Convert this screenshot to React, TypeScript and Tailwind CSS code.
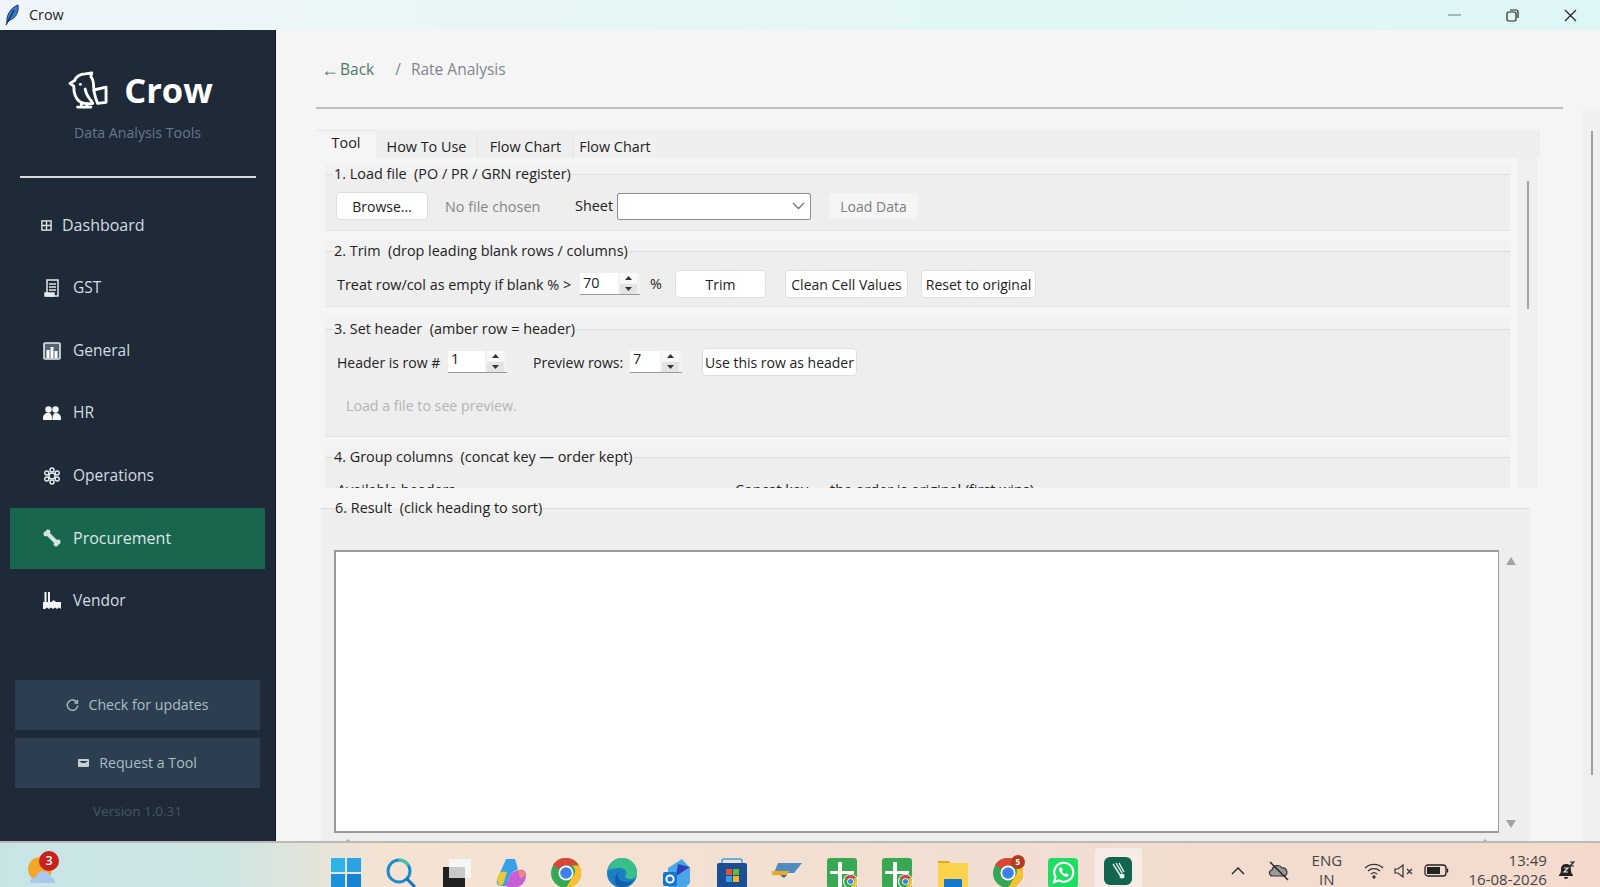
import React from "react";

function Feather() {
  return (
    <svg width="16" height="22" viewBox="0 0 16 22">
      <path d="M3 19C2 12 6 4 14 1c1 7-2 13-8 15z" fill="#3a78c8" stroke="#1c3f78" strokeWidth="1" />
      <path d="M2 21 10 6" stroke="#10284f" strokeWidth="1.2" />
    </svg>
  );
}

function BirdLogo() {
  return (
    <svg width="40" height="38" viewBox="0 0 42 40" fill="none" stroke="#fff" strokeWidth="3" strokeLinejoin="round" strokeLinecap="round">
      <path d="M7 10c1-4 6-7 11-7l7-1-1 4c3 3 3 7 3 12" />
      <path d="M7 10 2 13l4 3c0 7 1 12 6 16 4 2 10 3 14 2" />
      <path d="M27 20 40 17v16l-9 1c-2-5-3-9-4-14z" />
      <path d="M18 19c1 5 3 9 7 13" />
      <path d="M10 38h14M14 34v4M20 35v3" />
      <circle cx="13" cy="14" r="1.500" fill="#fff" stroke="none" />
    </svg>
  );
}

function NavIcon({ name }: { name: string }) {
  if (name === "Dashboard") {
    return (
      <svg width="11" height="11" viewBox="0 0 12 12" fill="none" stroke="#e5e9ee" strokeWidth="1.500">
        <rect x="1" y="1" width="10" height="10" />
        <path d="M1 6h10M6 1v10" />
      </svg>
    );
  }
  if (name === "GST") {
    return (
      <svg width="18" height="18" viewBox="0 0 18 18" fill="none" stroke="#e5e9ee" strokeWidth="1.500">
        <path d="M4 1h11v16H4z" />
        <path d="M6 5h7M6 8h7M6 11h7" />
        <path d="M2 14h9v3H2z" fill="#e5e9ee" />
      </svg>
    );
  }
  if (name === "General") {
    return (
      <svg width="18" height="18" viewBox="0 0 18 18">
        <rect x="1" y="1" width="16" height="16" rx="1" fill="#566275" stroke="#e5e9ee" strokeWidth="1.600" />
        <path d="M3.500 8h3v8h-3zM7.500 5h3v11h-3zM11.500 9h3v7h-3z" fill="#fff" />
      </svg>
    );
  }
  if (name === "HR") {
    return (
      <svg width="18" height="14" viewBox="0 0 18 14" fill="#f6f7f8">
        <circle cx="5.500" cy="3.500" r="3.200" />
        <circle cx="12.500" cy="3.500" r="3.200" />
        <path d="M0 14v-2c0-3 2-5 5-5s4 2 4 5v2zM9.500 14v-2c0-3 1-5 3.500-5s5 2 5 5v2z" />
      </svg>
    );
  }
  if (name === "Operations") {
    return (
      <svg width="18" height="18" viewBox="0 0 18 18" fill="none" stroke="#e5e9ee" strokeWidth="1.500">
        <circle cx="9" cy="9" r="3" />
        <circle cx="9" cy="3" r="2" />
        <circle cx="9" cy="15" r="2" />
        <circle cx="3.800" cy="6" r="2" />
        <circle cx="14.200" cy="6" r="2" />
        <circle cx="3.800" cy="12" r="2" />
        <circle cx="14.200" cy="12" r="2" />
      </svg>
    );
  }
  if (name === "Procurement") {
    return (
      <svg width="18" height="18" viewBox="0 0 18 18" fill="#d5e2dc">
        <path d="M4 4 14 14" stroke="#d5e2dc" strokeWidth="4" />
        <circle cx="2.800" cy="5" r="2.400" />
        <circle cx="5" cy="2.800" r="2.400" />
        <circle cx="13" cy="15.200" r="2.400" />
        <circle cx="15.200" cy="13" r="2.400" />
      </svg>
    );
  }
  return (
    <svg width="18" height="18" viewBox="0 0 18 18" fill="#f2f4f6">
      <path d="M1.500 0h2v10h-2zM5 0h2v10H5z" />
      <path d="M0 17v-7h8.500l2-2 2.500 2h5v7l-2-1.500L14 17l-2-1.500L10 17l-2-1.500L6 17l-2-1.500L2 17z" />
    </svg>
  );
}

function NavItem({ name, active }: { name: string; active?: boolean }) {
  return (
    <div className={active ? "h-[61px] flex items-center bg-[#19664f] text-[#dbe8e2]" : "h-[61px] flex items-center text-[#d5dbe2]"}>
      <div className={name === "Dashboard" ? "w-[47px] flex justify-end pr-[5px]" : "w-[52px] flex justify-end pr-[1px]"}>
        <NavIcon name={name} />
      </div>
      <span className={name === "Dashboard" ? "ml-[5px] pb-[2px] text-[16px]" : active ? "ml-[11px] text-[16px]" : "ml-[11px] text-[15.500px]"}>{name}</span>
    </div>
  );
}

function Sidebar() {
  return (
    <aside className="w-[276px] shrink-0 flex flex-col bg-[#1e2a38] border-r border-[#10161d]">
      <div className="h-[165px] flex flex-col items-center pt-[40px]">
        <div className="flex items-center gap-[16px] h-[40px] pl-[6px]">
          <BirdLogo />
          <span className="text-[34.500px] font-bold text-white leading-none">Crow</span>
        </div>
        <div className="mt-[13px] text-[14.200px] text-[#66788c] leading-[20px]">Data Analysis Tools</div>
        <div className="mt-[33px] w-[236px] h-[2px] bg-[#d8dade]"></div>
      </div>
      <nav className="mx-[10px] flex flex-col gap-[1.500px]">
        <NavItem name="Dashboard" />
        <NavItem name="GST" />
        <NavItem name="General" />
        <NavItem name="HR" />
        <NavItem name="Operations" />
        <NavItem name="Procurement" active />
        <NavItem name="Vendor" />
      </nav>
      <div className="mt-auto px-[15px] pb-[17px] flex flex-col gap-[8px]">
        <div className="h-[50px] bg-[#2c3e50] flex items-center justify-center gap-[9px] text-[14.200px] text-[#a9bfc0]">
          <svg width="13" height="13" viewBox="0 0 13 13" fill="none" stroke="#a9bfc0" strokeWidth="1.400">
            <path d="M11 3.500A5.200 5.200 0 1 0 11.700 6.500" />
            <path d="M11.500 1v3h-3" />
          </svg>
          <span>Check for updates</span>
        </div>
        <div className="h-[50px] bg-[#2c3e50] flex items-center justify-center gap-[10px] text-[14.200px] text-[#a9bfc0]">
          <svg width="11" height="8" viewBox="0 0 11 8">
            <rect width="11" height="8" rx="1" fill="#c5d2d2" />
            <path d="M1 2h9L7 4H4z" fill="#2c3e50" />
          </svg>
          <span>Request a Tool</span>
        </div>
        <div className="mt-[2px] h-[26px] flex items-center justify-center text-[13.500px] text-[#465564]">Version 1.0.31</div>
      </div>
    </aside>
  );
}

function Frame({ title, height, head, children }: { title: string; height: string; head: string; children?: React.ReactNode }) {
  return (
    <section className={height + " shrink-0 bg-[#eeeeee] border-b border-[#e2e2e2] overflow-hidden"}>
      <div className={head + " flex items-center bg-[linear-gradient(#f2f2f2_50%,#eeeeee_50%)]"}>
        <span className="w-[8px] h-px bg-[#dcdcdc]"></span>
        <span className="px-[1px] text-[14.400px] text-[#222]">{title}</span>
        <span className="flex-1 h-px bg-[#dcdcdc]"></span>
      </div>
      {children}
    </section>
  );
}

function Btn({ label, cls }: { label: string; cls: string }) {
  return (
    <div className={cls + " h-[28px] shrink-0 flex items-center justify-center rounded-[4px] bg-white border border-[#dedede] text-[14px] text-[#222]"}>
      {label}
    </div>
  );
}

function Spin({ value, cls, lead }: { value: string; cls: string; lead: string }) {
  return (
    <div className={cls + " h-[22px] shrink-0 flex border-b border-[#9a9a9a]"}>
      <div className={lead + " flex-1 bg-white pl-[3px] text-[14.400px] text-[#222]"}>{value}</div>
      <div className="w-[22px] pl-[2px] pr-[3px] flex flex-col justify-center gap-[1px] bg-[#f2f2f2]">
        <div className="h-[10px] flex items-center justify-center bg-[#f9f9f9]">
          <svg width="7" height="4" viewBox="0 0 7 4"><path d="M3.500 0 7 4H0z" fill="#333" /></svg>
        </div>
        <div className="h-[10px] flex items-center justify-center bg-[#e4e4e4]">
          <svg width="7" height="4" viewBox="0 0 7 4"><path d="M0 0h7L3.500 4z" fill="#333" /></svg>
        </div>
      </div>
    </div>
  );
}

function ToolPane() {
  return (
    <div className="h-[330px] shrink-0 flex overflow-hidden">
      <div className="w-[1185px] ml-[9px] flex flex-col gap-[10px] pt-[6px]">
        <Frame title="1. Load file  (PO / PR / GRN register)" height="h-[67px]" head="h-[20px]">
          <div className="h-[28px] mt-[8px] pl-[11px] flex items-center">
            <Btn label="Browse..." cls="w-[92px]" />
            <span className="ml-[17px] w-[130px] pt-[1px] text-[14.400px] text-[#858585]">No file chosen</span>
            <span className="text-[14.400px] text-[#222]">Sheet</span>
            <div className="ml-[4px] w-[194px] h-[27px] bg-white border border-[#8e8e8e] rounded-[2px] flex items-center justify-end pr-[5px]">
              <svg width="13" height="8" viewBox="0 0 13 8" fill="none" stroke="#777" strokeWidth="1.400"><path d="M1 1l5.500 5.500L12 1" /></svg>
            </div>
            <div className="ml-[18px] w-[89px] h-[26px] rounded-[3px] bg-[#f5f5f5] flex items-center justify-center text-[14px] text-[#7d7d7d]">Load Data</div>
          </div>
        </Frame>
        <Frame title="2. Trim  (drop leading blank rows / columns)" height="h-[66px]" head="h-[20px]">
          <div className="h-[28px] mt-[9px] pl-[12px] flex items-center">
            <span className="w-[243px] pt-[1px] text-[14.400px] text-[#222]">Treat row/col as empty if blank % &gt;</span>
            <Spin value="70" cls="w-[60px]" lead="leading-[19px]" />
            <span className="ml-[10px] w-[25px] text-[14.400px] text-[#222]">%</span>
            <Btn label="Trim" cls="w-[91px]" />
            <Btn label="Clean Cell Values" cls="ml-[19px] w-[123px]" />
            <Btn label="Reset to original" cls="ml-[13px] w-[115px]" />
          </div>
        </Frame>
        <Frame title="3. Set header  (amber row = header)" height="h-[120px]" head="h-[24px]">
          <div className="h-[28px] mt-[7px] pl-[12px] flex items-center">
            <span className="w-[111px] text-[14px] text-[#222]">Header is row #</span>
            <Spin value="1" cls="w-[59px]" lead="leading-[15px]" />
            <span className="ml-[26px] w-[97px] text-[14px] text-[#222]">Preview rows:</span>
            <Spin value="7" cls="w-[52px]" lead="leading-[15px]" />
            <Btn label="Use this row as header" cls="ml-[20px] w-[155px]" />
          </div>
          <div className="mt-[20px] pl-[21px] h-[20px] text-[14.200px] leading-[20px] text-[#b4b4b4]">Load a file to see preview.</div>
        </Frame>
        <Frame title="4. Group columns  (concat key — order kept)" height="h-[60px]" head="h-[20px]">
          <div className="mt-[13px] pl-[12px] flex text-[14.400px] leading-[20px] text-[#222]">
            <span className="w-[398px]">Available headers</span>
            <span>Concat key — the order is original (first wins)</span>
          </div>
        </Frame>
      </div>
      <div className="ml-[8px] w-[19px] bg-[#efefef] flex justify-center pt-[23px]">
        <div className="w-[2px] h-[128px] bg-[#a3a3a3]"></div>
      </div>
    </div>
  );
}

function ResultPane() {
  return (
    <div className="ml-[-1px] w-[1222px] pl-[6px] pr-[7px] bg-[#f5f5f5] overflow-hidden flex-1">
      <section className="h-full bg-[#eeeeee]">
        <div className="h-[40px] flex items-center bg-[linear-gradient(#f5f5f5_50%,#eeeeee_50%)]">
          <span className="w-[13px] h-px bg-[#dcdcdc]"></span>
          <span className="px-[1px] text-[14.400px] text-[#222]">6. Result  (click heading to sort)</span>
          <span className="flex-1 h-px bg-[#dcdcdc]"></span>
        </div>
        <div className="flex mt-[22px] ml-[13px]">
          <div className="w-[1165px] h-[283px] bg-white border-2 border-[#9a9a9a] border-r-[1.500px]"></div>
          <div className="w-[24px] h-[283px] flex flex-col items-center justify-between pt-[7px] pb-[5px]">
            <svg width="10" height="8" viewBox="0 0 10 8"><path d="M5 0l5 8H0z" fill="#a3a3a3" /></svg>
            <svg width="10" height="8" viewBox="0 0 10 8"><path d="M0 0h10L5 8z" fill="#a3a3a3" /></svg>
          </div>
        </div>
        <div className="ml-[13px] mt-[6px] w-[1165px] flex justify-between px-[10px]">
          <svg width="8" height="4" viewBox="0 0 8 4"><path d="M4 0l4 4H0z" fill="#ababab" /></svg>
          <svg width="8" height="4" viewBox="0 0 8 4"><path d="M4 0l4 4H0z" fill="#ababab" /></svg>
        </div>
      </section>
    </div>
  );
}

function Main() {
  return (
    <main className="flex-1 min-w-0 flex flex-col bg-[#f5f5f5]">
      <div className="h-[79px] shrink-0 pl-[40px] pr-[37px]">
        <div className="h-full border-b-2 border-[#bdbdbd] flex items-center pl-[5px] pt-[3px] text-[15.500px]">
          <span className="font-['Liberation_Sans',sans-serif] text-[18px] leading-none text-[#5b6d68]">←</span>
          <span className="ml-[1px] text-[#4b7a69]">Back</span>
          <span className="ml-[21px] text-[#7c8791]">/</span>
          <span className="ml-[10px] text-[#7c8791]">Rate Analysis</span>
        </div>
      </div>
      <div className="flex-1 min-h-0 flex">
        <div className="flex-1 min-w-0 pl-[40px] pt-[21px] flex flex-col">
          <div className="w-[1224px] h-[28px] shrink-0 flex items-end bg-[#eeeeee] text-[14.400px] text-[#222]">
            <div className="w-[60px] h-[28px] bg-[#f5f5f5] border-t border-[#e6e6e6] flex items-center justify-center pb-[3px]">Tool</div>
            <div className="w-[102px] h-[25px] pt-[2px] flex items-center justify-center border-r border-[#e4e4e4]">How To Use</div>
            <div className="w-[96px] h-[25px] pt-[2px] flex items-center justify-center border-r border-[#e4e4e4]">Flow Chart</div>
            <div className="w-[82px] h-[25px] pt-[2px] flex items-center justify-center bg-[#f0f0f0]">Flow Chart</div>
          </div>
          <div className="w-[1224px] flex-1 min-h-0 flex flex-col">
            <ToolPane />
            <ResultPane />
          </div>
        </div>
        <div className="w-[17px] shrink-0 bg-[#f0f0f0] flex justify-center pt-[22px]">
          <div className="w-[2px] h-[644px] bg-[#9e9e9e]"></div>
        </div>
      </div>
    </main>
  );
}

function TaskIcon({ children, active }: { children: React.ReactNode; active?: boolean }) {
  if (active) {
    return (
      <div className="w-[55.200px] h-[46px] flex justify-center">
        <div className="w-[47px] h-[41px] mt-[5px] pt-[9px] flex justify-center bg-[#f7ece5] rounded-t-[4px]">{children}</div>
      </div>
    );
  }
  return <div className="w-[55.200px] h-[46px] flex items-start justify-center pt-[15px]">{children}</div>;
}

function ChromeIcon({ size = 30 }: { size?: number }) {
  return (
    <svg width={size} height={size} viewBox="0 0 30 30">
      <circle cx="15" cy="15" r="15" fill="#34a853" />
      <path d="M15 0a15 15 0 0 1 13 7.500H15a7.500 7.500 0 0 0-6.500 3.700L2 7A15 15 0 0 1 15 0z" fill="#db4437" />
      <path d="M28 7.500A15 15 0 0 1 15 30l6.500-11a7.500 7.500 0 0 0 0-11.500z" fill="#fbc02d" />
      <circle cx="15" cy="15" r="7.500" fill="#fff" />
      <circle cx="15" cy="15" r="5.800" fill="#3f7fe8" />
    </svg>
  );
}

function SheetIcon() {
  return (
    <div className="relative w-[30px] h-[30px]">
      <svg width="30" height="30" viewBox="0 0 30 30">
        <rect width="30" height="30" rx="3" fill="#38a852" />
        <path d="M11 4h4v9h12v3H15v14h-4V16H3v-3h8z" fill="#fff" />
      </svg>
      <div className="absolute right-[-1px] bottom-[-1px] rounded-full bg-white p-[1px]">
        <ChromeIcon size={13} />
      </div>
    </div>
  );
}

function Taskbar() {
  return (
    <footer className="h-[46px] shrink-0 flex border-t-2 border-[#bdb8b2] overflow-hidden bg-[linear-gradient(90deg,#c8e5e6_0%,#cde5e3_14%,#f4e3d2_24%,#f1ded2_60%,#f3dacd_100%)]">
      <div className="w-[318px] shrink-0 pl-[27px] pt-[7px]">
        <div className="relative w-[30px] h-[34px]">
          <svg width="30" height="34" viewBox="0 0 30 34" className="mt-[4px]">
            <circle cx="13" cy="15" r="12" fill="#f4a62a" />
            <path d="M3 29c0-4 3-6 6-6 1-4 4-6 7-6 4 0 7 3 7 6 3 0 5 2 5 6z" fill="#a9c8ee" />
          </svg>
          <div className="absolute left-[12px] top-[-3px] w-[20px] h-[20px] rounded-full bg-[#c8201c] flex items-center justify-center text-[12.500px] font-semibold text-white">3</div>
        </div>
      </div>
      <div className="flex">
        <TaskIcon>
          <svg width="30" height="30" viewBox="0 0 30 30">
            <path d="M0 0h14v14H0z" fill="#2cb3ea" />
            <path d="M16 0h14v14H16z" fill="#2aa2e6" />
            <path d="M0 16h14v14H0z" fill="#1b92dc" />
            <path d="M16 16h14v14H16z" fill="#1684d3" />
          </svg>
        </TaskIcon>
        <TaskIcon>
          <svg width="30" height="30" viewBox="0 0 30 30" fill="none" strokeWidth="3">
            <circle cx="13" cy="13" r="11" stroke="#1b8bd0" />
            <path d="M13 2a11 11 0 0 1 9 5" stroke="#43c6a2" />
            <path d="M21 21l7 7" stroke="#1473b8" strokeLinecap="round" />
          </svg>
        </TaskIcon>
        <TaskIcon>
          <svg width="30" height="30" viewBox="0 0 30 30">
            <rect x="2" y="9" width="22" height="20" fill="#202020" />
            <rect x="8" y="1" width="22" height="19" fill="#f6f6f6" />
            <rect x="8" y="9" width="16" height="11" fill="#c9c9c9" />
          </svg>
        </TaskIcon>
        <TaskIcon>
          <svg width="30" height="30" viewBox="0 0 30 30">
            <path d="M10 1h9l3 10-7 4-5 13H5c-3 0-5-2-4-6z" fill="#38a0e8" />
            <path d="M1 22C2 15 5 12 11 14l-3 10c-1 3-3 4-5 4z" fill="#e8c93a" />
            <path d="M20 29h-8c-2 0-3-2 0-6l3-8 7-3c4-1 8 0 8 5 0 6-4 12-10 12z" fill="#c65fd6" />
            <path d="M22 12l2 8 5-2c1-3-1-6-7-6z" fill="#f08a6e" />
          </svg>
        </TaskIcon>
        <TaskIcon><ChromeIcon /></TaskIcon>
        <TaskIcon>
          <svg width="30" height="30" viewBox="0 0 30 30">
            <circle cx="15" cy="15" r="15" fill="#1a7fc4" />
            <path d="M1 12C3 4 9 0 15 0c8 0 15 6 15 15 0 4-3 6-7 6-3 0-5-1-5-3 3-2 1-8-5-8-7 0-12 2-12 2z" fill="#38c08a" />
            <path d="M12 13c-3 3-1 10 6 11 4 1 7-1 9-3-3 6-8 9-14 8C7 28 6 19 12 13z" fill="#0f5fa8" />
          </svg>
        </TaskIcon>
        <TaskIcon>
          <svg width="30" height="30" viewBox="0 0 30 30">
            <path d="M6 10 20 1l8 9v15l-4 4H6z" fill="#49a6e8" />
            <path d="M16 6l12 3-14 9z" fill="#2f3fb8" />
            <rect x="1" y="14" width="14" height="14" rx="2" fill="#1376d2" />
            <circle cx="8" cy="21" r="3.600" fill="none" stroke="#fff" strokeWidth="2" />
          </svg>
        </TaskIcon>
        <TaskIcon>
          <svg width="30" height="30" viewBox="0 0 30 30">
            <path d="M5 6V3a2 2 0 0 1 2-2h16a2 2 0 0 1 2 2v3" fill="none" stroke="#3aa0d8" strokeWidth="1.500" />
            <rect y="5" width="30" height="25" rx="2" fill="#1b4f94" />
            <path d="M9 11h6v6H9z" fill="#e8512f" />
            <path d="M16 11h6v6h-6z" fill="#6ab82f" />
            <path d="M9 18h6v6H9z" fill="#2e9fe8" />
            <path d="M16 18h6v6h-6z" fill="#f6b51e" />
          </svg>
        </TaskIcon>
        <TaskIcon>
          <svg width="30" height="30" viewBox="0 0 30 30">
            <path d="M6 5h24l-8 10H2z" fill="#4f8cc4" />
            <path d="M0 13h17l-2 4H0z" fill="#f0a81e" />
            <path d="M8 17h7l-3 3z" fill="#3a6a96" />
          </svg>
        </TaskIcon>
        <TaskIcon><SheetIcon /></TaskIcon>
        <TaskIcon><SheetIcon /></TaskIcon>
        <TaskIcon>
          <svg width="30" height="30" viewBox="0 0 30 30">
            <path d="M0 3h11l2 3H0z" fill="#e2a81c" />
            <rect y="5" width="30" height="25" fill="#fbd24e" />
            <rect x="6" y="21" width="18" height="9" rx="1" fill="#1678cc" />
          </svg>
        </TaskIcon>
        <TaskIcon>
          <div className="relative w-[30px] h-[30px]">
            <ChromeIcon />
            <div className="absolute right-[-2px] top-[-3px] w-[14px] h-[14px] rounded-full bg-[#b83a1e] flex items-center justify-center text-[8px] font-bold text-white">5</div>
          </div>
        </TaskIcon>
        <TaskIcon>
          <svg width="30" height="30" viewBox="0 0 30 30">
            <rect width="30" height="30" rx="4" fill="#1fdc63" />
            <path d="M6 24l1.500-5A9.500 9.500 0 1 1 11 22.500z" fill="none" stroke="#fff" strokeWidth="2.200" />
            <path d="M11 10c-1 3 4 9 8 9l2-2-3-2-1 1c-1 0-3-2-3-3l1-1-2-3z" fill="#fff" />
          </svg>
        </TaskIcon>
        <TaskIcon active>
          <svg width="28" height="28" viewBox="0 0 28 28">
            <rect width="28" height="28" rx="6" fill="#12664e" />
            <path d="M9 7l7 11M12 6l6 10M15 6l5 9" stroke="#e8efec" strokeWidth="1.400" />
            <circle cx="18" cy="19" r="2.500" fill="#e8efec" />
          </svg>
        </TaskIcon>
      </div>
      <div className="flex-1 flex items-start text-[#333]">
        <div className="ml-[85px] mt-[24px]">
          <svg width="14" height="8" viewBox="0 0 14 8" fill="none" stroke="#222" strokeWidth="1.400"><path d="M1 7l6-6 6 6" /></svg>
        </div>
        <div className="ml-[23px] mt-[18px]">
          <svg width="22" height="20" viewBox="0 0 22 20">
            <path d="M5 15c-4 0-5-5-1-6 1-5 8-6 10-2 5-1 7 7 2 8z" fill="#9a9a9a" stroke="#333" strokeWidth="1.200" />
            <path d="M2 1l18 18" stroke="#222" strokeWidth="1.400" />
          </svg>
        </div>
        <div className="ml-[22px] w-[30px] pt-[8px] flex flex-col items-center text-[15px] leading-[19px] text-[#444]">
          <span>ENG</span>
          <span>IN</span>
        </div>
        <div className="ml-[22px] mt-[20px]">
          <svg width="20" height="16" viewBox="0 0 20 16" fill="none" stroke="#333" strokeWidth="1.300">
            <path d="M1 5a13 13 0 0 1 18 0M4 8a9 9 0 0 1 12 0M7 11a4.500 4.500 0 0 1 6 0" />
            <circle cx="10" cy="14" r="1" fill="#333" />
          </svg>
        </div>
        <div className="ml-[10px] mt-[21px]">
          <svg width="19" height="14" viewBox="0 0 19 14" fill="none" stroke="#333" strokeWidth="1.200">
            <path d="M1 5h3l5-4v12L4 9H1z" />
            <path d="M13 5l5 5M18 5l-5 5" />
          </svg>
        </div>
        <div className="ml-[11px] mt-[21px]">
          <svg width="25" height="13" viewBox="0 0 25 13">
            <rect x="1" y="1" width="21" height="11" rx="3" fill="none" stroke="#222" strokeWidth="1.300" />
            <rect x="3" y="3" width="13" height="7" fill="#222" />
            <path d="M23.500 4.500v4" stroke="#222" strokeWidth="1.400" />
          </svg>
        </div>
        <div className="ml-[20px] w-[78px] flex flex-col items-end text-[15px] leading-[19px] text-[#444] pt-[8px]">
          <span>13:49</span>
          <span>16-08-2026</span>
        </div>
        <div className="ml-[12px] mt-[18px]">
          <svg width="16" height="20" viewBox="0 0 16 20">
            <path d="M7 3c-4 0-5 3-5 6 0 3-1 4-2 5v1h14v-1c-1-1-2-2-2-5 0-4-1-6-5-6z" fill="#222" />
            <path d="M5 16h4a2 2 0 0 1-4 0z" fill="#222" />
            <path d="M5 7h4l-4 4h4" fill="none" stroke="#f3dacd" strokeWidth="1.200" />
            <path d="M11 1h4l-4 4h4" fill="none" stroke="#222" strokeWidth="1.200" />
          </svg>
        </div>
      </div>
    </footer>
  );
}

export default function App() {
  return (
    <div className="w-[1600px] h-[887px] flex flex-col overflow-hidden font-['Open_Sans',sans-serif] whitespace-pre">
      <header className="h-[30px] shrink-0 flex items-center pl-[4px] bg-[linear-gradient(90deg,#eff5f9_0%,#e4f6f6_50%,#dff6f6_100%)]">
        <Feather />
        <span className="ml-[9px] pb-[1px] text-[14.400px] text-[#222]">Crow</span>
        <div className="ml-auto pr-[1px] flex items-center text-[#222]">
          <div className="w-[58px] flex justify-center"><div className="w-[13px] h-[2px] bg-[#a9b6b6]"></div></div>
          <div className="w-[58px] flex justify-center">
            <svg width="13" height="13" viewBox="0 0 13 13" fill="none" stroke="#222" strokeWidth="1.200">
              <rect x="1" y="3" width="9" height="9" rx="1.500" />
              <path d="M4 1h6a2 2 0 0 1 2 2v6" />
            </svg>
          </div>
          <div className="w-[58px] flex justify-center">
            <svg width="13" height="13" viewBox="0 0 13 13" fill="none" stroke="#222" strokeWidth="1.200"><path d="M1 1l11 11M12 1 1 12" /></svg>
          </div>
        </div>
      </header>
      <div className="flex-1 min-h-0 flex">
        <Sidebar />
        <Main />
      </div>
      <Taskbar />
    </div>
  );
}
